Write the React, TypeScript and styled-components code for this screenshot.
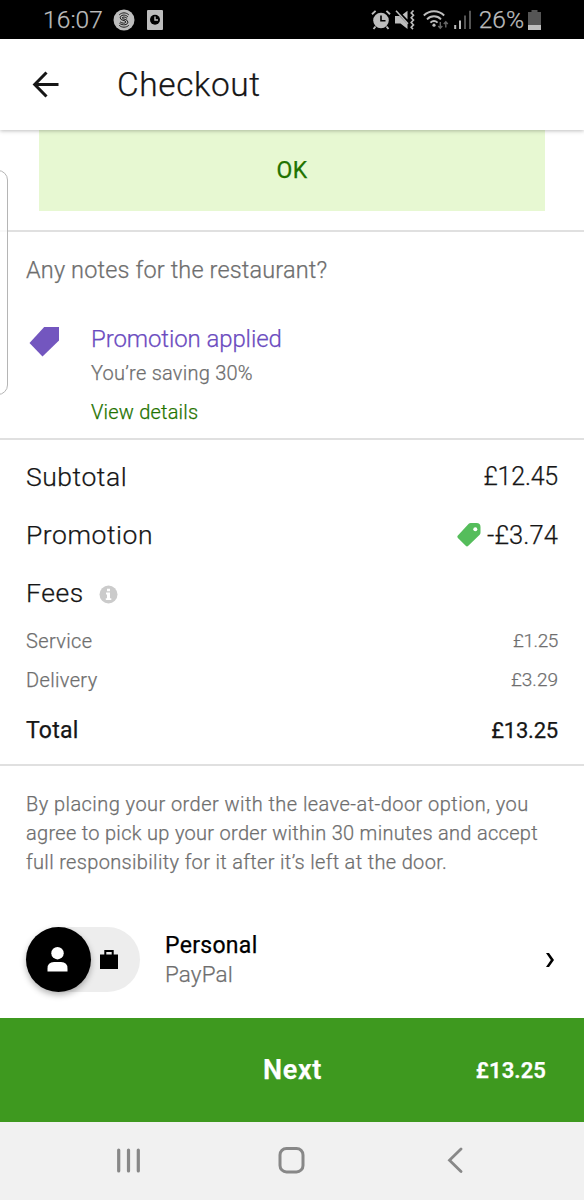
import React from "react";
import styled, { createGlobalStyle } from "styled-components";

const GlobalStyle = createGlobalStyle`
  body { margin: 0; background: #fff; }
  * { box-sizing: border-box; }
  svg { display: block; flex: none; }
`;

const Screen = styled.div`
  position: relative;
  display: flex;
  flex-direction: column;
  width: 584px;
  height: 1200px;
  overflow: hidden;
  background: #fff;
  color: #161616;
  font-family: Roboto, "Liberation Sans", sans-serif;
  font-weight: 300;
  -webkit-text-stroke: 0.25px currentColor;
`;

const StatusBar = styled.div`
  display: flex;
  justify-content: space-between;
  height: 39px;
  padding: 0 43px 0 43px;
  background: #000;
  color: #bdbdbd;
`;

const StatusGroup = styled.div`
  display: flex;
  align-items: center;
`;

const StatusText = styled.span<{ $spacing: number }>`
  font-size: 24.5px;
  font-weight: 300;
  line-height: 39px;
  letter-spacing: ${(p) => p.$spacing}px;
`;

const Header = styled.header`
  position: relative;
  z-index: 1;
  display: flex;
  align-items: center;
  height: 91px;
  padding-left: 32px;
  background: #fff;
  box-shadow: 0 1px 4px rgba(0, 0, 0, 0.26);
`;

const Title = styled.h1`
  margin: 0 0 0 57px;
  font-size: 33.5px;
  font-weight: 300;
  line-height: 40px;
  letter-spacing: 0.55px;
`;

const ConfirmButton = styled.button`
  height: 81px;
  margin: 0 39px 19px;
  padding: 0;
  border: 0;
  background: #e7f8d2;
  color: #1f7300;
  font: 400 23px/82px Roboto, sans-serif;
  letter-spacing: 0.4px;
  -webkit-text-stroke: 0.25px currentColor;
`;

const Divider = styled.hr`
  flex: none;
  width: 100%;
  height: 2px;
  margin: 0;
  border: 0;
  background: #e0e0e0;
`;

const Notes = styled.div`
  height: 76px;
  padding-left: 26px;
  color: #6e6e6e;
  font-size: 23.5px;
  line-height: 76px;
  letter-spacing: 0.15px;
`;

const PromoBanner = styled.section`
  display: flex;
  height: 130px;
  padding: 15px 0 0 29px;
`;

const PromoText = styled.div`
  display: flex;
  flex-direction: column;
  margin-left: 31px;
`;

const PromoTitle = styled.span`
  color: #6b4bc0;
  font-size: 24px;
  line-height: 33px;
  letter-spacing: -0.1px;
`;

const PromoDetail = styled.span`
  color: #6e6e6e;
  font-size: 20px;
  line-height: 35px;
  letter-spacing: 0.25px;
`;

const PromoLink = styled.a`
  color: #1f7300;
  font-size: 20px;
  line-height: 42px;
  letter-spacing: 0.2px;
`;

const Summary = styled.section`
  display: flex;
  flex-direction: column;
  height: 324px;
  padding: 7px 26px 0 26px;
`;

type LineKind = "main" | "minor" | "total";

const lineStyles: Record<LineKind, { size: number; weight: number; color: string; spacing: number }> = {
  main: { size: 26.5, weight: 300, color: "#161616", spacing: 0.55 },
  minor: { size: 20, weight: 300, color: "#6e6e6e", spacing: 0.35 },
  total: { size: 23, weight: 400, color: "#161616", spacing: 0.25 },
};

const Line = styled.div<{ $kind: LineKind; $height: number }>`
  display: flex;
  align-items: center;
  justify-content: space-between;
  height: ${(p) => p.$height}px;
  color: ${(p) => lineStyles[p.$kind].color};
  font-size: ${(p) => lineStyles[p.$kind].size}px;
  font-weight: ${(p) => lineStyles[p.$kind].weight};
  letter-spacing: ${(p) => lineStyles[p.$kind].spacing}px;
`;

const LineLabel = styled.span`
  display: flex;
  align-items: center;
  gap: 15px;
`;

const Amount = styled.span<{ $size: number; $spacing: number }>`
  display: flex;
  align-items: center;
  gap: 6px;
  font-size: ${(p) => p.$size}px;
  letter-spacing: ${(p) => p.$spacing}px;
`;

const Terms = styled.p`
  height: 111px;
  margin: 0;
  padding: 24px 0 0 26px;
  color: #6e6e6e;
  font-size: 20px;
  line-height: 29px;
  white-space: nowrap;
`;

const TermsLine = styled.span<{ $spacing: number }>`
  display: block;
  letter-spacing: ${(p) => p.$spacing}px;
`;

const Payment = styled.section`
  display: flex;
  align-items: center;
  height: 141px;
  padding: 24px 30px 0 26px;
`;

const ProfileSwitch = styled.div`
  display: flex;
  align-items: center;
  width: 114px;
  height: 65px;
  border-radius: 33px;
  background: #ededed;
`;

const ProfileKnob = styled.div`
  display: flex;
  align-items: center;
  justify-content: center;
  width: 65px;
  height: 65px;
  margin-right: 9px;
  padding-right: 2px;
  border-radius: 50%;
  background: #000;
  box-shadow: 0 3px 6px rgba(0, 0, 0, 0.3);
`;

const PaymentText = styled.div`
  display: flex;
  flex: 1;
  flex-direction: column;
  margin-left: 25px;
`;

const PaymentName = styled.span`
  color: #000;
  font-size: 23px;
  font-weight: 400;
  line-height: 29px;
  letter-spacing: 0.3px;
`;

const PaymentMethod = styled.span`
  color: #6e6e6e;
  font-size: 22.5px;
  line-height: 28px;
  letter-spacing: 0.1px;
`;

const NextBar = styled.button`
  display: grid;
  grid-template-columns: 1fr auto 1fr;
  align-items: center;
  height: 104px;
  padding: 0 38px 0 39px;
  border: 0;
  background: #3e991f;
  color: #fff;
  font-family: Roboto, sans-serif;
  font-weight: 600;
`;

const NextLabel = styled.span`
  grid-column: 2;
  font-size: 27px;
  letter-spacing: 0.7px;
`;

const NextAmount = styled.span`
  justify-self: end;
  font-size: 22px;
  letter-spacing: 0.1px;
`;

const SystemNav = styled.nav`
  display: flex;
  align-items: center;
  justify-content: space-between;
  height: 78px;
  padding: 0 121px 2px 116px;
  background: #f1f1f1;
`;

const EdgePanel = styled.div`
  position: absolute;
  z-index: 2;
  top: 170px;
  left: -20px;
  width: 28px;
  height: 225px;
  border: 1px solid #b5b5b5;
  border-radius: 10px;
  background: rgba(255, 255, 255, 0.8);
`;

const MusicBadge = () => (
  <svg width="22" height="22" viewBox="0 0 22 22">
    <circle cx="11" cy="11" r="10.5" fill="#bdbdbd" />
    <g fill="none" stroke="#1a1a1a" strokeWidth="1" strokeLinecap="round">
      <path d="M6.5 5.600C9 3.200 13 3.200 15.500 5.600" />
      <path d="M14.600 7.600C12.400 5 7.200 5.800 7.200 8.800c0 3.200 5.600 2 5.600 4.200 0 1.500-3.400 1.700-5.400.1" />
      <path d="M13.900 9.200C12.600 7.600 9.200 7.700 9.200 8.900c0 1.500 5.700 1 5.700 4.200 0 3-5.300 3.700-8.200 1.400" />
      <path d="M6.500 16.600c2.500 2.200 6.500 2.200 9 0" />
    </g>
  </svg>
);

const ClockCard = () => (
  <svg width="16" height="20" viewBox="0 0 16 20">
    <rect width="16" height="20" rx="1" fill="#bdbdbd" />
    <circle cx="8" cy="9.7" r="5" fill="#000" />
    <path d="M8 6.500v3.500h3" fill="none" stroke="#bdbdbd" strokeWidth="1.4" />
  </svg>
);

const Alarm = () => (
  <svg width="20" height="20" viewBox="0 0 20 20">
    <circle cx="10" cy="10.5" r="7.8" fill="#bdbdbd" />
    <path d="M1 4.200 4.600.9M19 4.200 15.400.9M4.500 16.500l-2 2.500M15.500 16.500l2 2.500" stroke="#bdbdbd" strokeWidth="1.9" />
    <path d="M10 5.500v5.200h4.500" fill="none" stroke="#000" strokeWidth="1.6" />
  </svg>
);

const MutedVibrate = () => (
  <svg width="20" height="20" viewBox="0 0 20 20">
    <path d="M0 6h4.500l8 8v5L5.500 13.500H0zM7.600 4.600 12.500.8v8.700z" fill="#bdbdbd" />
    <path d="M1 .8 13 13.800" stroke="#bdbdbd" strokeWidth="1.5" />
    <path d="M18.500.5l-2.300 2.400 2.300 2.400-2.300 2.400 2.300 2.400-2.300 2.400 2.300 2.400-2.300 2.400 1.800 1.800" fill="none" stroke="#bdbdbd" strokeWidth="1.6" />
  </svg>
);

const Wifi = () => (
  <svg width="26" height="20" viewBox="0 0 26 20">
    <g fill="none" stroke="#bdbdbd" strokeWidth="1.9">
      <path d="M.8 5.500C6.500-.2 15.500-.2 21.200 5.500M4 9.300c4-4 10-4 14 0M7.400 12.600c2.200-2.100 5-2.100 7.200 0" />
    </g>
    <circle cx="11" cy="15.2" r="1.6" fill="#bdbdbd" />
    <path d="M17.300 12v6M15.300 16l2 2.200 2-2.200M22.800 17.500v-5.500M20.800 14l2-2.200 2 2.200" fill="none" stroke="#666" strokeWidth="1.4" />
  </svg>
);

const Signal = () => (
  <svg width="18" height="19" viewBox="0 0 18 19">
    <path d="M1.200 15v4M6 10.500V19" stroke="#bdbdbd" strokeWidth="2" />
    <path d="M11 5.500V19M16 .8V19" stroke="#555" strokeWidth="2" />
  </svg>
);

const Battery = () => (
  <svg width="13" height="20" viewBox="0 0 13 20">
    <path d="M3.500 0h6v2H13v13H0V2h3.500z" fill="#555" />
    <path d="M0 15h13v5H0z" fill="#bdbdbd" />
  </svg>
);

const BackArrow = () => (
  <svg width="28" height="28" viewBox="0 0 28 28">
    <path d="M14.500 1.500 2.700 13.500l11.800 12M3 13.500h23.500" fill="none" stroke="#161616" strokeWidth="3" />
  </svg>
);

const TagShape = styled.svg`
  margin-top: 4px;
`;

const PurpleTag = () => (
  <TagShape width="31" height="30" viewBox="0 0 31 30">
    <path d="M15.200 0H30V13.500L13.500 29.500.5 16z" fill="#7356bf" />
  </TagShape>
);

const GreenTag = () => (
  <svg width="24" height="24" viewBox="0 0 24 24">
    <path d="M11.700.7Q12.500 0 13.700 0H19.500Q23.500 0 23.500 4V9.500Q23.500 11 22.700 11.800L11.300 22.800Q10 24 8.700 22.800L.9 15Q-.2 13.800.9 12.600z" fill="#55bd5b" />
    <circle cx="18.3" cy="6.2" r="2" fill="#fff" />
  </svg>
);

const InfoShape = styled.svg`
  margin-top: 4px;
`;

const Info = () => (
  <InfoShape width="19" height="19" viewBox="0 0 19 19">
    <circle cx="9.5" cy="9.5" r="9" fill="#cbcbcb" />
    <path d="M8 3.800h3v2.500H8zM7 7.600h4v5.600h1.300V15H6.800v-1.800H8V9.400H7z" fill="#fff" />
  </InfoShape>
);

const Person = () => (
  <svg width="21" height="25" viewBox="0 0 21 25">
    <circle cx="10.5" cy="6.2" r="6.2" fill="#fff" />
    <path d="M.5 24.500V21.500Q.5 15 7 15h7q6.500 0 6.500 6.500v3z" fill="#fff" />
  </svg>
);

const Briefcase = () => (
  <svg width="18" height="19" viewBox="0 0 18 19">
    <path d="M0 4.500h4.300V0h9.400v4.500H18V19H0zM6.300 2v2.500h5.400V2z" fillRule="evenodd" fill="#000" />
  </svg>
);

const Chevron = () => (
  <svg width="8" height="14" viewBox="0 0 8 14">
    <path d="M0 0H3L8 7 3 14H0L4.800 7z" fill="#000" />
  </svg>
);

const RecentsKey = () => (
  <svg width="24" height="25" viewBox="0 0 24 25">
    <path d="M2.700 2v21M12.500 2v21M22.300 2v21" stroke="#888" strokeWidth="3.2" strokeLinecap="round" />
  </svg>
);

const HomeKey = () => (
  <svg width="31" height="28" viewBox="0 0 31 28">
    <rect x="2" y="2.5" width="23" height="23.4" rx="6.5" fill="none" stroke="#888" strokeWidth="3" />
  </svg>
);

const BackKey = () => (
  <svg width="16" height="26" viewBox="0 0 16 26">
    <path d="M14 2 2.500 13.200 14 24.500" fill="none" stroke="#888" strokeWidth="2.8" strokeLinecap="round" />
  </svg>
);

const Gap = styled.span<{ $w: number }>`
  width: ${(p) => p.$w}px;
`;

export default function App() {
  return (
    <Screen>
      <GlobalStyle />
      <StatusBar>
        <StatusGroup>
          <StatusText $spacing={0.1}>16:07</StatusText>
          <Gap $w={10} />
          <MusicBadge />
          <Gap $w={12} />
          <ClockCard />
        </StatusGroup>
        <StatusGroup>
          <Alarm />
          <Gap $w={4} />
          <MutedVibrate />
          <Gap $w={8} />
          <Wifi />
          <Gap $w={5} />
          <Signal />
          <Gap $w={7} />
          <StatusText $spacing={0}>26%</StatusText>
          <Gap $w={4} />
          <Battery />
        </StatusGroup>
      </StatusBar>
      <Header>
        <BackArrow />
        <Title>Checkout</Title>
      </Header>
      <ConfirmButton>OK</ConfirmButton>
      <Divider />
      <Notes>Any notes for the restaurant?</Notes>
      <PromoBanner>
        <PurpleTag />
        <PromoText>
          <PromoTitle>Promotion applied</PromoTitle>
          <PromoDetail>You’re saving 30%</PromoDetail>
          <PromoLink>View details</PromoLink>
        </PromoText>
      </PromoBanner>
      <Divider />
      <Summary>
        <Line $kind="main" $height={58}>
          <LineLabel>Subtotal</LineLabel>
          <Amount $size={25} $spacing={-0.2}>£12.45</Amount>
        </Line>
        <Line $kind="main" $height={59}>
          <LineLabel>Promotion</LineLabel>
          <Amount $size={25.5} $spacing={0.1}>
            <GreenTag />
            -£3.74
          </Amount>
        </Line>
        <Line $kind="main" $height={57}>
          <LineLabel>
            Fees
            <Info />
          </LineLabel>
        </Line>
        <Line $kind="minor" $height={39}>
          <LineLabel>Service</LineLabel>
          <Amount $size={19} $spacing={-0.4}>£1.25</Amount>
        </Line>
        <Line $kind="minor" $height={39}>
          <LineLabel>Delivery</LineLabel>
          <Amount $size={19} $spacing={0}>£3.29</Amount>
        </Line>
        <Line $kind="total" $height={62}>
          <LineLabel>Total</LineLabel>
          <Amount $size={22} $spacing={-0.2}>£13.25</Amount>
        </Line>
      </Summary>
      <Divider />
      <Terms>
        <TermsLine $spacing={0.44}>By placing your order with the leave-at-door option, you</TermsLine>
        <TermsLine $spacing={0.3}>agree to pick up your order within 30 minutes and accept</TermsLine>
        <TermsLine $spacing={0.34}>full responsibility for it after it’s left at the door.</TermsLine>
      </Terms>
      <Payment>
        <ProfileSwitch>
          <ProfileKnob>
            <Person />
          </ProfileKnob>
          <Briefcase />
        </ProfileSwitch>
        <PaymentText>
          <PaymentName>Personal</PaymentName>
          <PaymentMethod>PayPal</PaymentMethod>
        </PaymentText>
        <Chevron />
      </Payment>
      <NextBar>
        <NextLabel>Next</NextLabel>
        <NextAmount>£13.25</NextAmount>
      </NextBar>
      <SystemNav>
        <RecentsKey />
        <HomeKey />
        <BackKey />
      </SystemNav>
      <EdgePanel />
    </Screen>
  );
}
